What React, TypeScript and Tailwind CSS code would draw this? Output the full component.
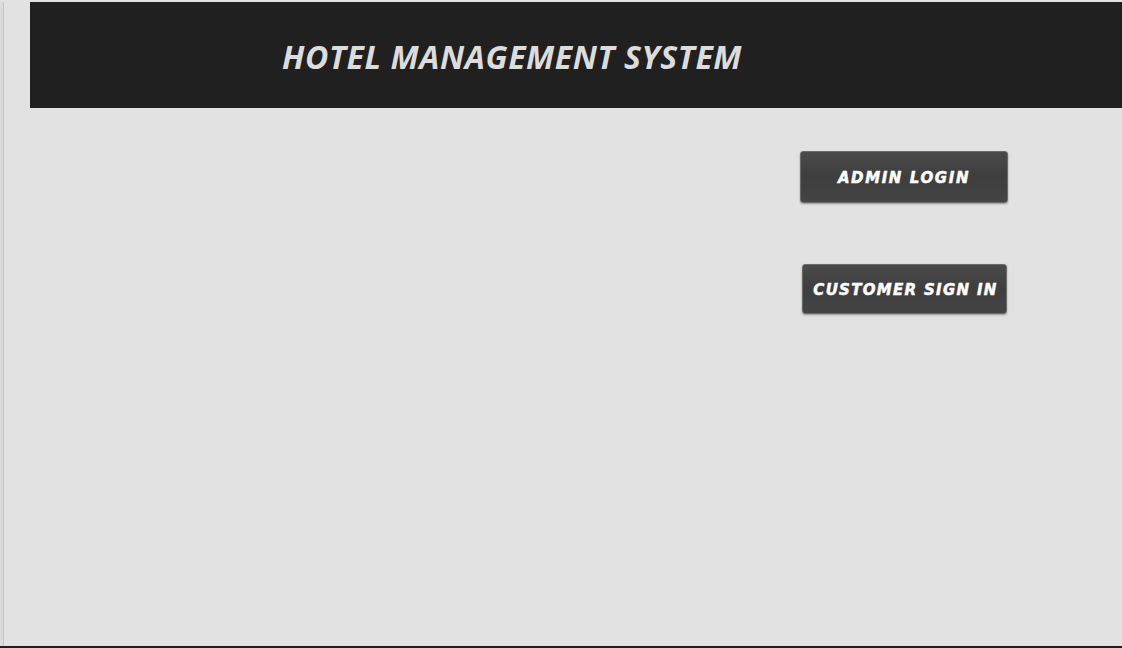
export default function App() {
  return (
    <div className="flex h-[648px] w-[1122px] flex-col overflow-hidden bg-[#e2e2e2] border-b-2 border-[#1e1e1e]">
      <div className="flex flex-1 pt-[2px]">
        {/* left window edge */}
        <div className="w-[3px] shrink-0 bg-[#dcdcdc]" />
        <div className="w-px shrink-0 bg-[#c4c4c4]" />
        <div className="flex flex-1 flex-col pl-[26px]">
          {/* Header banner */}
          <div className="flex h-[106px] items-center bg-[#202020] pl-[252px] pt-[4px]">
            <h1 className="font-['Open_Sans',sans-serif] text-[32px] font-bold italic tracking-[0.6px] text-[#dcdcdc]">
              HOTEL MANAGEMENT SYSTEM
            </h1>
          </div>

          {/* Actions */}
          <div className="flex flex-col items-end pr-[114px] pt-[43px]">
            <button className="flex h-[52px] w-[208px] items-center justify-center rounded-[3px] border border-[#6a6a6a] bg-gradient-to-b from-[#4a4a4a] via-[#3e3e3e] to-[#444] pt-[3px] font-['DejaVu_Sans',sans-serif] text-[15px] font-bold italic tracking-[1.6px] text-white [-webkit-text-stroke:0.5px_white] shadow-[0_1px_2px_rgba(0,0,0,0.35)]">
              ADMIN LOGIN
            </button>
            <button className="mt-[61px] mr-px flex h-[50px] w-[205px] items-center justify-center rounded-[3px] border border-[#6a6a6a] bg-gradient-to-b from-[#4a4a4a] via-[#3e3e3e] to-[#444] pt-[3px] pl-[2px] font-['DejaVu_Sans',sans-serif] text-[15px] font-bold italic tracking-[1.3px] text-white [-webkit-text-stroke:0.5px_white] shadow-[0_1px_2px_rgba(0,0,0,0.35)]">
              CUSTOMER SIGN IN
            </button>
          </div>
        </div>
      </div>
    </div>
  );
}
